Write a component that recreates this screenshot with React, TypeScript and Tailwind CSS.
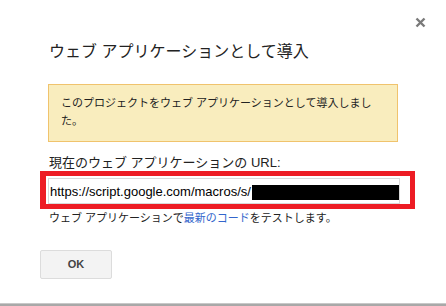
import React from 'react';

const font = { fontFamily: '"Liberation Sans", "Noto Sans CJK JP", sans-serif' };

export default function App() {
  return (
    <div className="relative w-[446px] h-[306px] bg-white flex flex-col text-[#222]" style={font}>
      {/* close */}
      <button className="absolute top-[16px] left-[414px] w-[12px] h-[12px] flex items-center justify-center">
        <svg width="11" height="11" viewBox="0 0 11 11">
          <path d="M1.5 1.5 L9.5 9.5 M9.5 1.5 L1.5 9.5" stroke="#7a7a7a" strokeWidth="2.4" strokeLinecap="butt" />
        </svg>
      </button>

      <div className="pl-[48px] pt-[40px] flex flex-col">
        <h1 className="text-[16px] leading-[24px] pl-[1px]">ウェブ アプリケーションとして導入</h1>

        <div className="mt-[20px] w-[350px] h-[58px] border border-[#f0c36d] bg-[#f9edbe] pl-[12px] pt-[9px]">
          <p className="w-[318px] text-[11px] leading-[18px]">
            このプロジェクトをウェブ アプリケーションとして導入しました。
          </p>
        </div>

        <p className="mt-[13px] text-[13px] leading-[16px] pl-[1px]">現在のウェブ アプリケーションの URL:</p>

        <div className="relative mt-[7px] w-[352px]">
          <div className="h-[26px] border border-[#d9d9d9] bg-white flex items-end pb-[3px] pl-[1px]">
            <span className="text-[13px] leading-[16px] text-black whitespace-nowrap">https://script.google.com/macros/s/</span>
            <span className="flex-1 h-[15px] bg-black ml-[1px]" />
          </div>
          {/* red highlight drawn over the field */}
          <div className="absolute left-[-8px] top-[-7px] w-[375px] h-[38px] border-[5px] border-l-[6px] border-[#ed1c24]" />
        </div>

        <p className="mt-[7px] text-[11px] leading-[14px] pl-[1px]">
          ウェブ アプリケーションで<span className="text-[#3366cc]">最新のコード</span>をテストします。
        </p>
      </div>

      <div className="pl-[40px] mt-[25px]">
        <button className="w-[72px] h-[29px] rounded-[2px] border border-[#dcdcdc] bg-[#f3f3f3] text-[11px] font-bold text-[#444]">
          OK
        </button>
      </div>

      <div className="mt-auto h-[3px] bg-[#a8a8a8] border-t border-[#c8c8c8]" />
    </div>
  );
}
